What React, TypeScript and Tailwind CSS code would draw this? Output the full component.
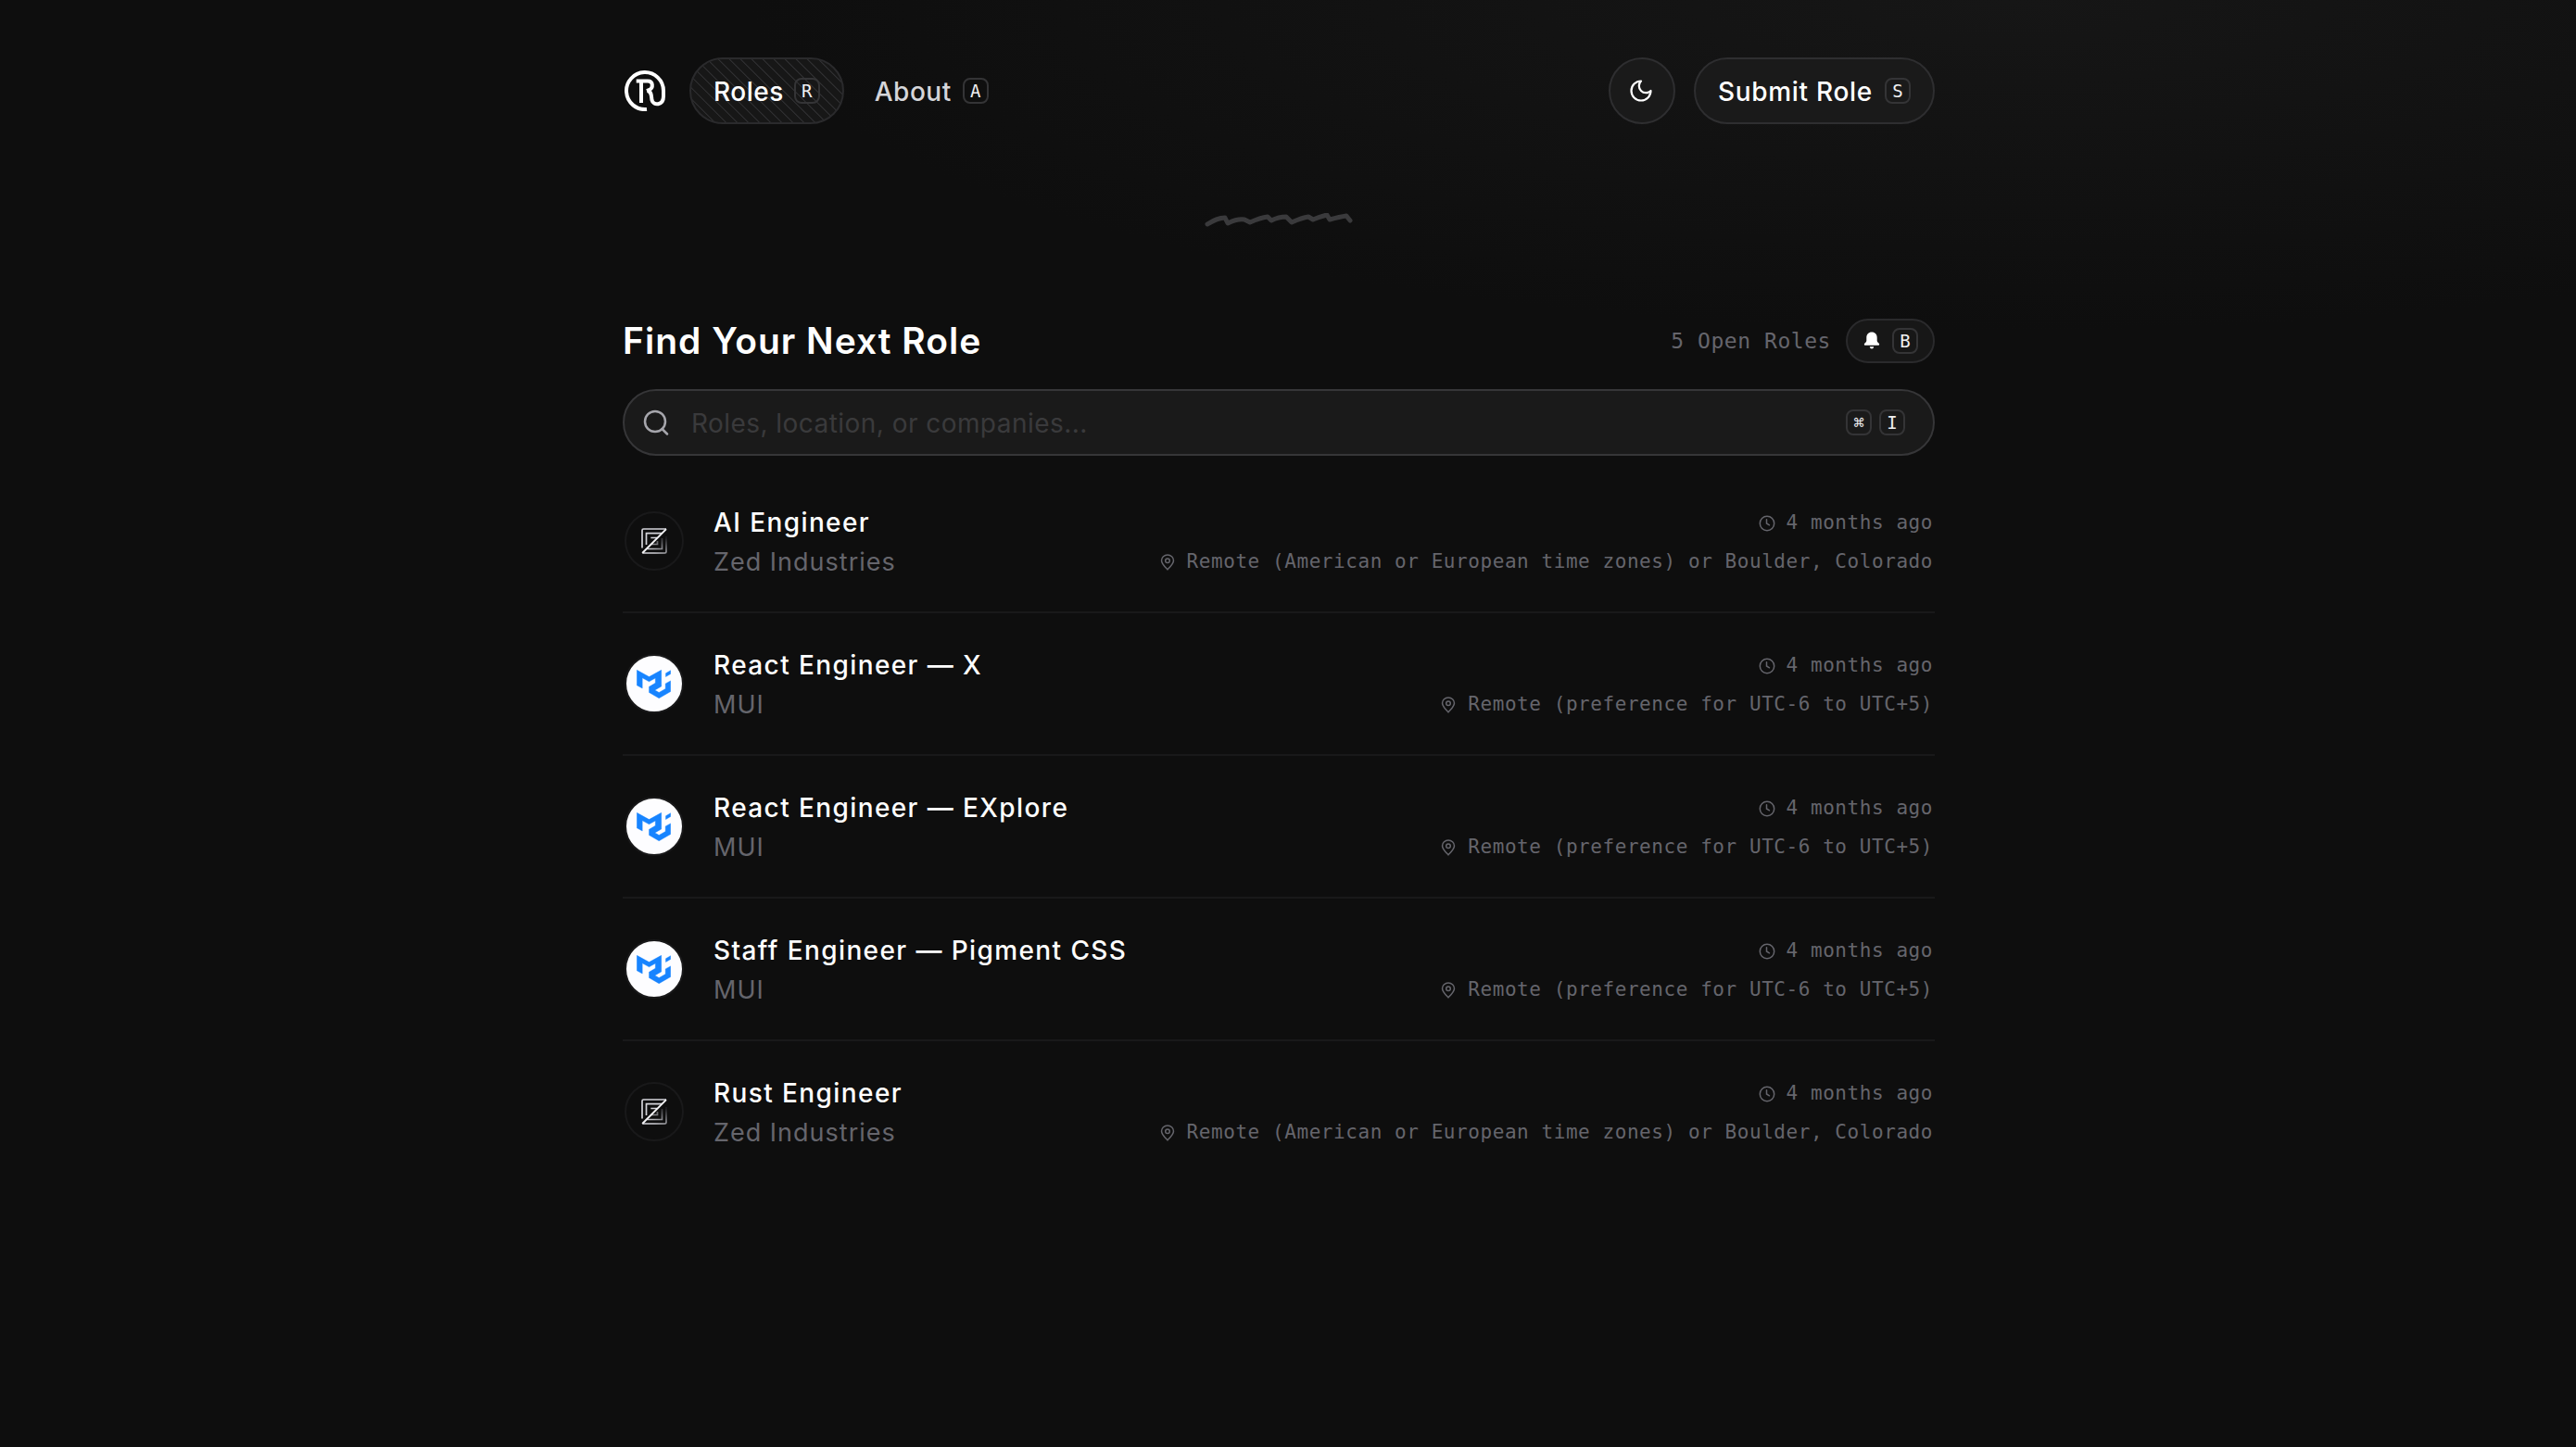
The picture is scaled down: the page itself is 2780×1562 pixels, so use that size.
import { clsx } from 'clsx';
import type { ReactNode } from 'react';

type Company = 'zed' | 'mui';

interface Role {
  title: string;
  company: string;
  logo: Company;
  location: string;
  posted: string;
}

const REMOTE_US_EU = 'Remote (American or European time zones) or Boulder, Colorado';
const REMOTE_UTC = 'Remote (preference for UTC-6 to UTC+5)';

const roles: Role[] = [
  { title: 'AI Engineer', company: 'Zed Industries', logo: 'zed', location: REMOTE_US_EU, posted: '4 months ago' },
  { title: 'React Engineer — X', company: 'MUI', logo: 'mui', location: REMOTE_UTC, posted: '4 months ago' },
  { title: 'React Engineer — EXplore', company: 'MUI', logo: 'mui', location: REMOTE_UTC, posted: '4 months ago' },
  { title: 'Staff Engineer — Pigment CSS', company: 'MUI', logo: 'mui', location: REMOTE_UTC, posted: '4 months ago' },
  { title: 'Rust Engineer', company: 'Zed Industries', logo: 'zed', location: REMOTE_US_EU, posted: '4 months ago' },
];

const Kbd = ({ children }: { children: ReactNode }) => (
  <kbd className="flex size-7 items-center justify-center rounded-lg border-2 border-[#343436] font-['DejaVu_Sans_Mono',monospace] text-[19px] leading-none font-normal tracking-normal text-[#f0f0f2]">
    {children}
  </kbd>
);

const Logo = () => (
  <svg viewBox="0 0 44 44" className="ml-[2px] size-11 shrink-0" fill="none" stroke="#fff" strokeWidth="4">
    <path d="M24 42A20 20 0 1 1 42 22V28C42 38 31 38.500 29.500 32C28.800 28 29.500 22.500 24.500 22" />
    <path d="M12.700 11.500H25C31.500 11.500 30.500 19 27.500 20.500L24 22M18 11.500V35" />
  </svg>
);

const Squiggle = () => (
  <svg viewBox="0 0 160 16" className="h-4 w-40" fill="none" stroke="#3a3a3c" strokeWidth="5" strokeLinecap="round" strokeLinejoin="round">
    <path d="M3 12C10 8 15 5 22 5L25 11Q35 6 43 7L49 10Q60 5 68 4L72 8Q80 4 88 4L94 10Q105 5 112 4L117 7Q124 4 132 2L135 7Q146 4 153 3L157 8" />
  </svg>
);

// Nested brackets split by the diagonal, fading out towards the right edge
const ZedMark = () => (
  <svg viewBox="0 0 28 28" className="size-7" fill="none" strokeWidth="1.700">
    <defs>
      <linearGradient id="zed-fade" gradientUnits="userSpaceOnUse" x1="14" y1="27" x2="24" y2="9">
        <stop offset="0" stopColor="#d0d0d6" />
        <stop offset="1" stopColor="#1c1c1f" />
      </linearGradient>
    </defs>
    <path d="M1 21.500V2.500Q1 1 2.500 1H27M5.500 18V5.700H22M10.300 10.500H17" stroke="#d4d4da" />
    <path d="M1.500 27H25.500Q27 27 27 25.500V9M6.500 22.500H22.500V11M11 17.500H17.500V14" stroke="url(#zed-fade)" />
    <path d="M27 1.200L1.200 27" stroke="#f4f4f6" strokeWidth="1.900" />
  </svg>
);

const MuiMark = () => (
  <svg viewBox="0 0 37 31" className="mr-px h-[31px] w-[37px]" fill="#1784ff" stroke="#1784ff" strokeWidth=".4" strokeLinejoin="round">
    <path d="M.3.3L13.500 7.600L26.700.300V18L19.800 21.900L24.200 24.500L31.200 20.500V14.900L36.700 11.900V23.500L24.200 30.700L13.500 24.500V18.300L20.300 14.300V9L13.500 12.800L6.200 8.800V20L.3 16.800Z" />
    <path d="M31.500 3.800L36.700.700V4.500L31.500 7.500Z" />
  </svg>
);

const MoonIcon = () => (
  <svg viewBox="0 0 24 24" className="mr-px size-7" fill="none" stroke="#fff" strokeWidth="1.900" strokeLinecap="round" strokeLinejoin="round">
    <path d="M12 3a6 6 0 0 0 9 9 9 9 0 1 1-9-9Z" />
  </svg>
);

const SearchIcon = () => (
  <svg viewBox="0 0 28 28" className="size-7" fill="none" stroke="#a6a6ac" strokeWidth="2.500" strokeLinecap="round">
    <circle cx="13" cy="13" r="11" />
    <path d="M20.500 21L26 26.500" />
  </svg>
);

const BellIcon = () => (
  <svg viewBox="0 0 18 20" className="h-5 w-[18px]" fill="#fff">
    <path d="M9 .5C5.500.500 3.300 3 3.300 6.500V10C3.300 11.500.800 12.500.800 13.800c0 .5.400.9.900.9h14.600c.5 0 .9-.4.900-.9 0-1.300-2.500-2.300-2.500-3.800V6.500C14.700 3 12.500.500 9 .500Z" />
    <path d="M6.800 16.200h4.400C11 19.200 7 19.200 6.800 16.200Z" />
  </svg>
);

const ClockIcon = () => (
  <svg viewBox="0 0 18 18" className="mr-3 size-[18px]" fill="none" stroke="#65656c" strokeWidth="1.500" strokeLinecap="round">
    <circle cx="9" cy="9" r="7.700" />
    <path d="M8.500 4.800V9L11.500 10.800" />
  </svg>
);

const PinIcon = () => (
  <svg viewBox="0 0 16 18" className="mr-[13px] h-[18px] w-4" fill="none" stroke="#65656c" strokeWidth="1.500">
    <path d="M8 16.800C4.500 13.200 1.500 10.500 1.500 7a6.500 6 0 0 1 13 0C14.500 10.500 11.500 13.200 8 16.800Z" />
    <circle cx="8" cy="7.300" r="2.300" />
  </svg>
);

const CompanyLogo = ({ logo }: { logo: Company }) => (
  <div
    className={clsx(
      'flex size-16 shrink-0 items-center justify-center rounded-full border-2 border-[#19191a]',
      logo === 'mui' ? 'bg-[#fdfdff]' : 'bg-[#0e0e0e]',
    )}
  >
    {logo === 'mui' ? <MuiMark /> : <ZedMark />}
  </div>
);

const Meta = ({ icon, children }: { icon: ReactNode; children: ReactNode }) => (
  <span className="flex items-center pt-px pr-[2px] font-['DejaVu_Sans_Mono',monospace] text-[21px] tracking-[0.56px] text-[#65656c]">
    {icon}
    {children}
  </span>
);

const RoleRow = ({ role }: { role: Role }) => (
  <li className="flex h-[154px] items-center border-b-2 border-[#19191a] pl-[2px] last:border-transparent">
    <CompanyLogo logo={role.logo} />
    <div className="mt-[3px] ml-8 flex-1">
      <div className="flex h-[42px] items-center justify-between">
        <h2 className="pb-px text-[28px] font-medium tracking-[1.4px] text-white">{role.title}</h2>
        <Meta icon={<ClockIcon />}>{role.posted}</Meta>
      </div>
      <div className="flex h-[42px] items-center justify-between">
        <p className="pt-[2px] text-[27px] tracking-[1px] text-[#65656c]">{role.company}</p>
        <Meta icon={<PinIcon />}>{role.location}</Meta>
      </div>
    </div>
  </li>
);

const App = () => {
  return (
    <div className="min-h-[1562px] bg-[#0e0e0e] bg-[radial-gradient(ellipse_1600px_420px_at_78%_0%,#161616_0%,#0e0e0e_85%)] pr-5 font-['Inter',sans-serif]">
      <main className="mx-auto w-[1416px] pt-[62px]">
        <header className="flex h-[72px] items-center text-[28px] font-medium tracking-[0.5px] text-white">
          <Logo />
          <a className="ml-[26px] flex h-[72px] items-center gap-[11px] rounded-full border-2 border-[#2a2a2c] bg-[#171717] bg-[repeating-linear-gradient(45deg,#2e2e30_0px,#2e2e30_1.2px,transparent_1.6px,transparent_8.490px)] px-6">
            <span className="pt-[2px]">Roles</span>
            <Kbd>R</Kbd>
          </a>
          <a className="ml-[33px] flex items-center gap-3 text-[#d5d5d9]">
            <span className="pt-[2px]">About</span>
            <Kbd>A</Kbd>
          </a>
          <button className="ml-auto flex size-[72px] items-center justify-center rounded-full border-2 border-[#2e2e30] bg-[#1a1a1a]">
            <MoonIcon />
          </button>
          <button className="ml-5 flex h-[72px] items-center gap-[13px] rounded-full border-2 border-[#2e2e30] bg-[#1a1a1a] px-6 tracking-[0.7px]">
            <span className="pt-[2px]">Submit Role</span>
            <Kbd>S</Kbd>
          </button>
        </header>

        <div className="mt-24 flex justify-center">
          <Squiggle />
        </div>

        <section className="mt-[98px]">
          <div className="flex h-12 items-center">
            <h1 className="pt-px text-[39px] font-semibold tracking-[1px] text-white">Find Your Next Role</h1>
            <span className="mr-4 ml-auto font-['DejaVu_Sans_Mono',monospace] text-[23px] tracking-[0.55px] text-[#65656c]">
              5 Open Roles
            </span>
            <button className="flex h-12 items-center gap-[13px] rounded-full border-2 border-[#2a2a2c] bg-[#171717] pr-4 pl-[17px]">
              <BellIcon />
              <Kbd>B</Kbd>
            </button>
          </div>
          <div className="mt-7 flex h-[72px] items-center rounded-full border-2 border-[#363638] bg-[#1a1a1a] pr-[30px] pl-5">
            <SearchIcon />
            <span className="ml-6 flex-1 pt-px text-[28px] tracking-[0.45px] text-[#3a3a3c]">
              Roles, location, or companies...
            </span>
            <div className="flex gap-2">
              <Kbd>⌘</Kbd>
              <Kbd>I</Kbd>
            </div>
          </div>
        </section>

        <ul className="mt-4">
          {roles.map((role) => (
            <RoleRow key={role.title} role={role} />
          ))}
        </ul>
      </main>
    </div>
  );
};

export default App;
